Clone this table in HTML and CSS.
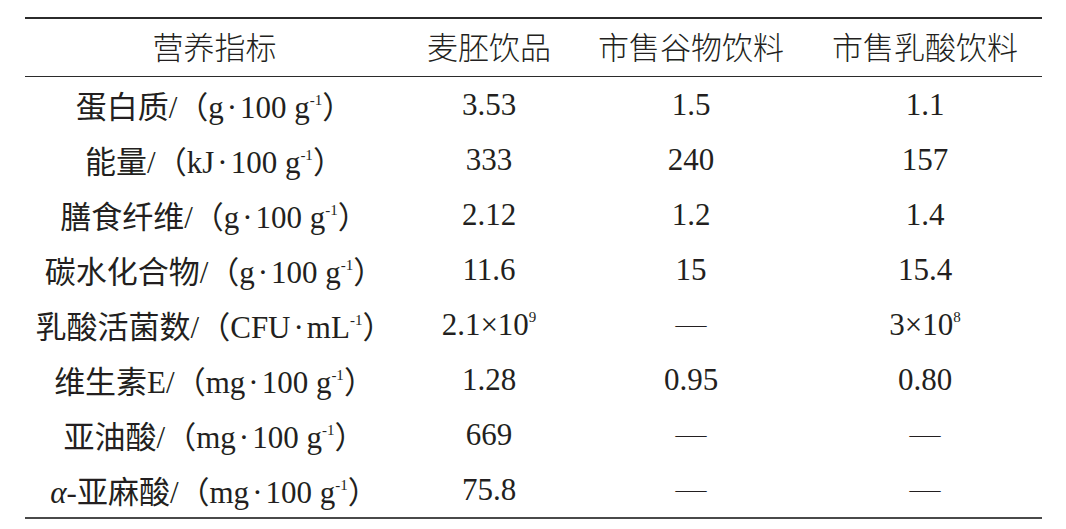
FILE: index.html
```html
<!DOCTYPE html>
<html lang="en">
<head>
  <meta charset="UTF-8">
  <meta name="viewport" content="width=device-width, initial-scale=1.0">
  <title>营养指标</title>
  <link rel="stylesheet" href="styles.css">
</head>
<body>
  <table class="nutri">
    <colgroup>
      <col class="c1">
      <col class="c2">
      <col class="c3">
      <col class="c4">
    </colgroup>
    <thead>
      <tr>
        <th>营养指标</th>
        <th>麦胚饮品</th>
        <th>市售谷物饮料</th>
        <th>市售乳酸饮料</th>
      </tr>
    </thead>
    <tbody>
      <tr>
        <td>蛋白质/（g<span class="dot">·</span>100 g<sup>-1</sup>）</td>
        <td class="num">3.53</td>
        <td class="num">1.5</td>
        <td class="num">1.1</td>
      </tr>
      <tr>
        <td>能量/（kJ<span class="dot">·</span>100 g<sup>-1</sup>）</td>
        <td class="num">333</td>
        <td class="num">240</td>
        <td class="num">157</td>
      </tr>
      <tr>
        <td>膳食纤维/（g<span class="dot">·</span>100 g<sup>-1</sup>）</td>
        <td class="num">2.12</td>
        <td class="num">1.2</td>
        <td class="num">1.4</td>
      </tr>
      <tr>
        <td>碳水化合物/（g<span class="dot">·</span>100 g<sup>-1</sup>）</td>
        <td class="num">11.6</td>
        <td class="num">15</td>
        <td class="num">15.4</td>
      </tr>
      <tr>
        <td>乳酸活菌数/（CFU<span class="dot">·</span>mL<sup>-1</sup>）</td>
        <td class="num">2.1×10<sup>9</sup></td>
        <td class="num"><span class="dash">—</span></td>
        <td class="num">3×10<sup>8</sup></td>
      </tr>
      <tr>
        <td>维生素E/（mg<span class="dot">·</span>100 g<sup>-1</sup>）</td>
        <td class="num">1.28</td>
        <td class="num">0.95</td>
        <td class="num">0.80</td>
      </tr>
      <tr>
        <td>亚油酸/（mg<span class="dot">·</span>100 g<sup>-1</sup>）</td>
        <td class="num">669</td>
        <td class="num"><span class="dash">—</span></td>
        <td class="num"><span class="dash">—</span></td>
      </tr>
      <tr>
        <td><i>α</i>-亚麻酸/（mg<span class="dot">·</span>100 g<sup>-1</sup>）</td>
        <td class="num">75.8</td>
        <td class="num"><span class="dash">—</span></td>
        <td class="num"><span class="dash">—</span></td>
      </tr>
    </tbody>
  </table>
</body>
</html>
```

FILE: styles.css
```css
body {
  margin: 0;
  background: #fff;
  color: #231f20;
  font-family: "Liberation Serif", "Noto Sans CJK SC", serif;
}
.nutri {
  margin: 17px 0 0 25px;
  width: 1017px;
  border-collapse: collapse;
  table-layout: fixed;
  border-top: 2px solid #2b2b2b;
  border-bottom: 2px solid #4a4a4a;
  font-size: 31px;
}
.c1 { width: 379px; }
.c2 { width: 170px; }
.c3 { width: 234px; }
.c4 { width: 234px; }
.nutri th {
  height: 53px;
  padding: 0 0 4px;
  font-weight: 300;
  text-align: center;
  border-bottom: 1px solid #2b2b2b;
  font-family: "Noto Sans CJK SC", sans-serif;
}
.nutri td {
  height: 55px;
  padding: 0;
  text-align: center;
  white-space: nowrap;
}
.nutri .num {
  font-family: "Liberation Serif", "Times New Roman", serif;
}
.dot {
  margin: 0 3px;
}
.nutri sup {
  font-size: 15px;
  vertical-align: 13px;
  line-height: 0;
}
.dash {
  display: inline-block;
  transform: scaleY(0.7);
}
```
